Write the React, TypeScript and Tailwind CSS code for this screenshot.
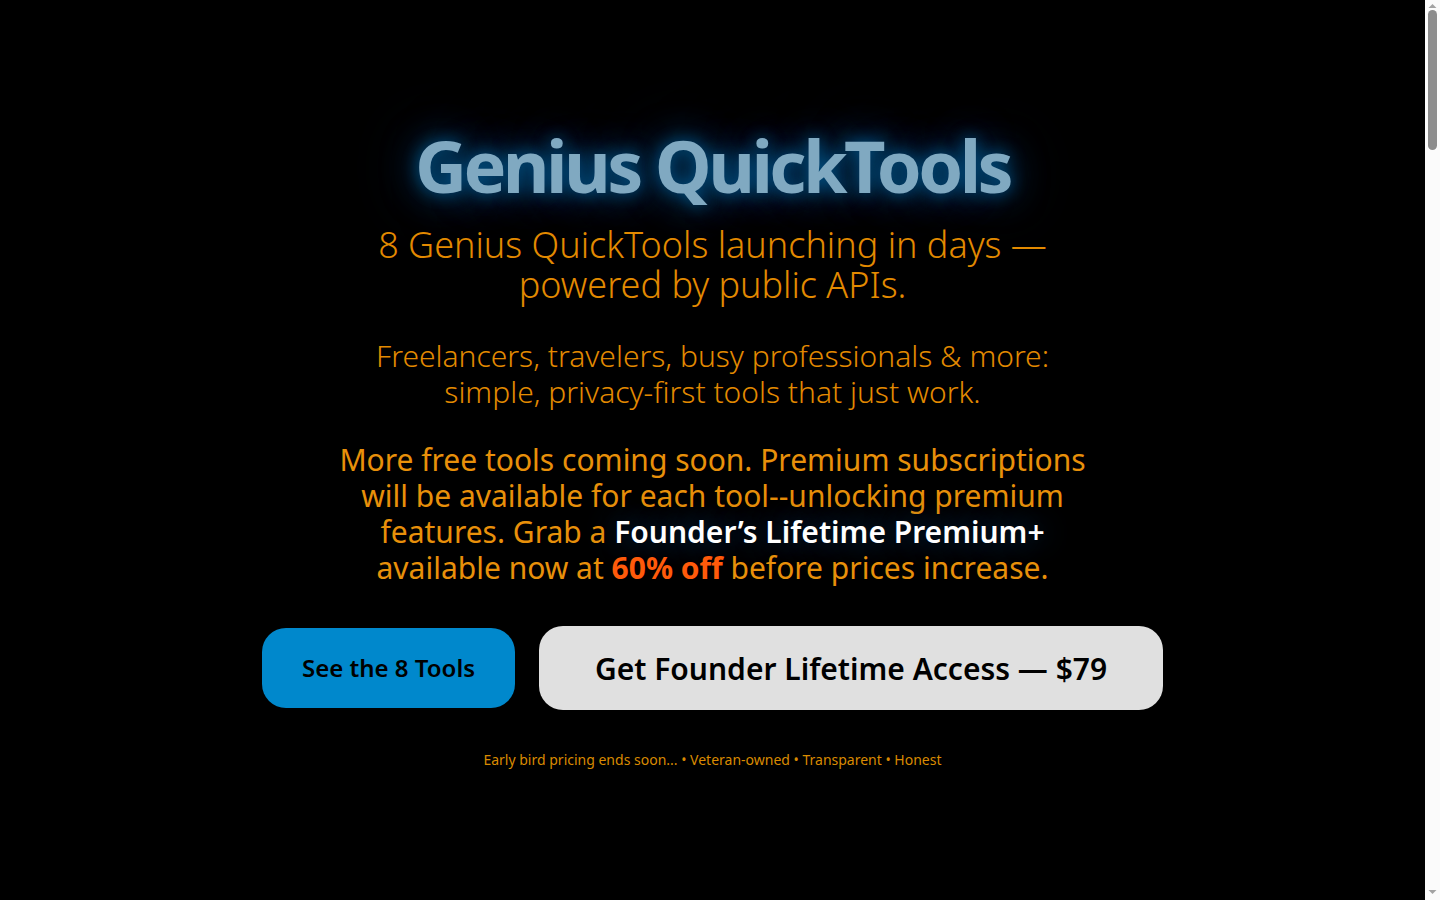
import React from "react";

function FakeScrollbar() {
  return (
    <div className="flex h-screen w-[15px] shrink-0 flex-col items-center bg-[#fbfbfb]">
      <svg width="15" height="12" viewBox="0 0 15 12" className="shrink-0">
        <path d="M3.5 8 L7.5 4 L11.5 8 Z" fill="#a3a3a3" />
      </svg>
      <div className="mt-[-2px] h-[140px] w-[9px] rounded-full bg-[#8c8c8c]" />
      <div className="flex-1" />
      <svg width="15" height="15" viewBox="0 0 15 15" className="shrink-0">
        <path d="M3.5 5 L7.5 9 L11.5 5 Z" fill="#a3a3a3" />
      </svg>
    </div>
  );
}

export default function App() {
  return (
    <div className="flex h-screen overflow-hidden bg-black" style={{ fontFamily: '"Noto Sans", "Open Sans", sans-serif' }}>
      <main className="h-screen flex-1 overflow-y-auto [scrollbar-width:none] text-[#e38a00]">
        <div className="flex min-h-[5600px] flex-col items-center pt-[123px] text-center">
          <h1 className="mb-[16px] text-[72px] font-bold leading-[84px] tracking-[-0.05em] text-[#80a9c1] [text-shadow:0_0_16px_rgba(0,90,145,0.9),0_0_36px_rgba(0,80,135,0.85),0_0_70px_rgba(0,65,115,0.7),0_0_110px_rgba(0,45,85,0.5)]">
            Genius QuickTools
          </h1>
          <p className="mt-[2px] max-w-[700px] text-[36px] font-light leading-[40px] text-[#e38a00]">
            8 Genius QuickTools launching in days — powered by public APIs.
          </p>
          <p className="mt-[33px] max-w-[700px] text-[30px] font-light leading-[36px] text-[#e38a00]">
            Freelancers, travelers, busy professionals &amp; more: simple, privacy-first tools that just work.
          </p>
          <p className="mt-[32px] max-w-[760px] text-[30px] font-normal leading-[36px] text-[#e8900a]">
            More free tools coming soon. Premium subscriptions will be available for each tool--unlocking premium features. Grab a{" "}
            <span className="font-semibold text-white [text-shadow:0_0_30px_rgba(0,110,190,0.6)]">Founder’s Lifetime Premium+</span>{" "}
            available now at <span className="font-bold text-[#ff5a0a]">60% off</span> before prices increase.
          </p>
          <div className="mt-[40px] flex items-center gap-6">
            <button className="h-[80px] w-[253px] rounded-[24px] bg-[#0088cc] text-[24px] font-semibold text-black">
              See the 8 Tools
            </button>
            <button className="h-[84px] w-[624px] rounded-[24px] bg-[#e0e0e0] text-[30px] font-semibold text-black">
              Get Founder Lifetime Access — $79
            </button>
          </div>
          <p className="mt-[40px] text-[14px] leading-[20px] text-[#d98a00]">
            Early bird pricing ends soon... • Veteran-owned • Transparent • Honest
          </p>
        </div>
      </main>
      <FakeScrollbar />
    </div>
  );
}
